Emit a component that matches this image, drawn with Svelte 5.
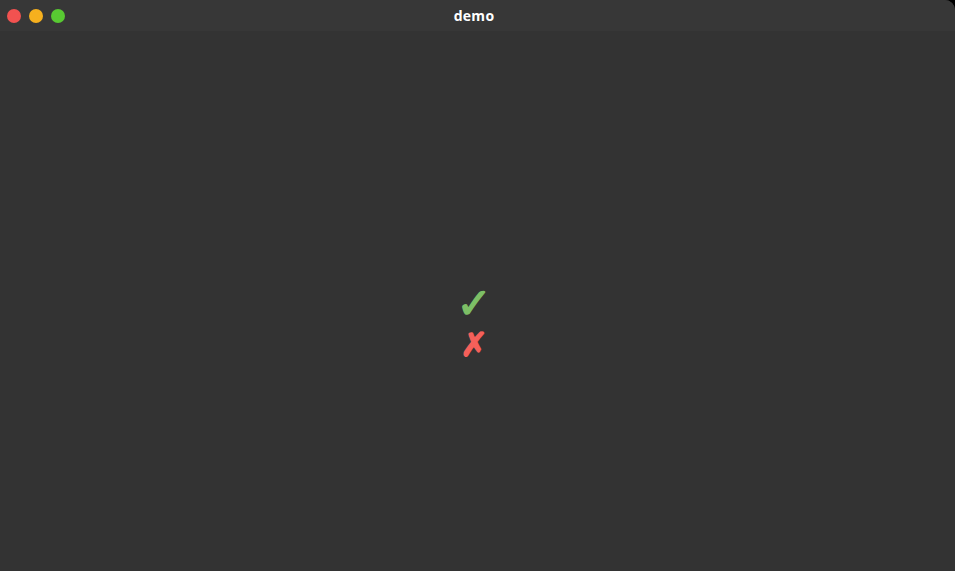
<script>
	const title = 'demo'
	const lights = ['close', 'minimize', 'maximize']
</script>

<div class="window">
	<header class="titlebar">
		<div class="lights">
			{#each lights as light}
				<span class="light {light}"></span>
			{/each}
		</div>
		<span class="title">{title}</span>
	</header>
	<main class="content">
		<span class="mark ok">✓</span>
		<span class="mark fail">✗</span>
	</main>
</div>

<style>
	:global(body) {
		background: #000;
		overflow: hidden;
	}
	.window {
		width: 955px;
		height: 571px;
		background: #333333;
		border-radius: 0 10px 0 0;
		display: flex;
		flex-direction: column;
		overflow: hidden;
		font-family: "DejaVu Sans", sans-serif;
	}
	.titlebar {
		height: 31px;
		flex: none;
		background: #373737;
		position: relative;
		display: flex;
		align-items: center;
		justify-content: center;
		padding-right: 7px;
		box-sizing: border-box;
	}
	.lights {
		position: absolute;
		left: 7px;
		top: 9px;
		display: flex;
		gap: 8px;
	}
	.light {
		width: 14px;
		height: 14px;
		border-radius: 50%;
	}
	.close {
		background: #f25250;
	}
	.minimize {
		background: #f6b01e;
	}
	.maximize {
		background: #58c932;
	}
	.title {
		color: #fff;
		font-family: "Open Sans", sans-serif;
		font-weight: 700;
		font-size: 14px;
		letter-spacing: 0.3px;
	}
	.content {
		flex: 1;
		display: flex;
		flex-direction: column;
		align-items: center;
		justify-content: center;
		padding: 46px 7px 0 0;
		box-sizing: border-box;
	}
	.mark {
		font-weight: 700;
		line-height: 41px;
		-webkit-text-stroke: 1.4px currentColor;
	}
	.ok {
		font-size: 42px;
		color: #7dbf66;
	}
	.fail {
		font-size: 33px;
		color: #f5605a;
	}
</style>
